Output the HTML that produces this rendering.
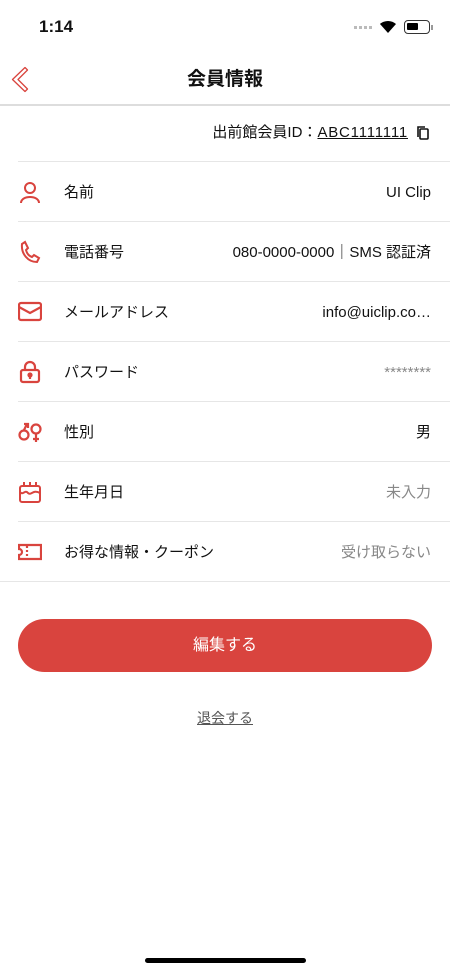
<!DOCTYPE html>
<html><head><meta charset="utf-8"><style>
*{margin:0;padding:0;box-sizing:border-box}
body{width:450px;height:974px;background:#fff;font-family:"Liberation Sans","Noto Sans CJK JP",sans-serif;color:#111;position:relative;overflow:hidden}
.abs{position:absolute}
.row{position:absolute;left:0;width:450px;height:60px}
.row .sep{position:absolute;left:18px;right:0;bottom:0;height:1px;background:#e6e6e6}
.row .lbl{position:absolute;left:64px;top:1px;line-height:60px;font-size:15px}
.row .val{position:absolute;right:19px;top:1px;line-height:60px;font-size:15px}
.row svg{position:absolute;left:18px;top:18px}
.g{color:#888}
</style></head><body>
<div class="abs" style="left:39px;top:17px;font-size:17px;font-weight:bold">1:14</div>
<div class="abs" style="left:354px;top:26px;width:20px;height:3px;background:repeating-linear-gradient(90deg,#bbb 0 3px,transparent 3px 5px)"></div>
<svg class="abs" style="left:379px;top:20px" width="18" height="14" viewBox="0 0 18 14"><path d="M9 13 L1 4 A12 12 0 0 1 17 4 Z" fill="#000"/></svg>
<div class="abs" style="left:404px;top:20px;width:26px;height:14px;border:1.5px solid #333;border-radius:4px"><div style="margin:2px;width:11px;height:7px;background:#000;border-radius:1px"></div></div>
<div class="abs" style="left:431px;top:25px;width:2px;height:5px;background:#999"></div>
<svg class="abs" style="left:10px;top:66px" width="20" height="28" viewBox="0 0 20 28"><path d="M15 1.5 L17.5 4 L8 13.5 L17.5 23 L15 25.5 L2.5 13.5 Z" fill="none" stroke="#d9443e" stroke-width="1.3" stroke-linejoin="round"/></svg>
<div class="abs" style="left:0;width:450px;top:66px;text-align:center;font-size:19px;font-weight:bold;line-height:28px">会員情報</div>
<div class="abs" style="left:0;top:104px;width:450px;height:2px;background:#ddd"></div>
<div class="abs" style="right:42px;top:122px;font-size:15px;line-height:22px">出前館会員ID：<span style="text-decoration:underline;letter-spacing:0.8px">ABC1111111</span></div>
<svg class="abs" style="left:416px;top:125px" width="14" height="16" viewBox="0 0 14 16"><rect x="4" y="4" width="8" height="10" fill="none" stroke="#111" stroke-width="1.6" rx="1"/><path d="M2 12 V2 H9" fill="none" stroke="#111" stroke-width="1.6"/></svg>
<div class="abs" style="left:18px;right:0;top:161px;height:1px;background:#e6e6e6"></div>

<div class="row" style="top:162px"><svg width="24" height="24" viewBox="0 0 24 24" fill="none" stroke="#d9443e" stroke-width="2"><circle cx="12" cy="8" r="5"/><path d="M3 23 C3 15 21 15 21 23"/></svg><div class="lbl">名前</div><div class="val">UI Clip</div><div class="sep"></div></div>
<div class="row" style="top:222px"><svg width="24" height="24" viewBox="0 0 24 24" fill="none" stroke="#d9443e" stroke-width="2"><path d="M7 2 L10 8 L8 10 C9 14 11 16 14 17 L16 15 L21 18 L19 22 C10 22 3 14 4 4 Z"/></svg><div class="lbl">電話番号</div><div class="val">080-0000-0000｜SMS 認証済</div><div class="sep"></div></div>
<div class="row" style="top:282px"><svg width="24" height="24" viewBox="0 0 24 24" fill="none" stroke="#d9443e" stroke-width="2.2"><rect x="1" y="3" width="22" height="17" rx="2"/><path d="M1 7 L12 13 L23 7"/></svg><div class="lbl">メールアドレス</div><div class="val">info@uiclip.co…</div><div class="sep"></div></div>
<div class="row" style="top:342px"><svg width="24" height="24" viewBox="0 0 24 24" fill="none" stroke="#d9443e" stroke-width="2.2"><path d="M7 10 V7 A5 5 0 0 1 17 7 V10"/><rect x="3" y="10" width="18" height="12" rx="2"/><circle cx="12" cy="15" r="1.5" fill="#d9443e"/><path d="M12 16 V19"/></svg><div class="lbl">パスワード</div><div class="val g">********</div><div class="sep"></div></div>
<div class="row" style="top:402px"><svg width="26" height="24" viewBox="0 0 26 24" fill="none" stroke="#d9443e" stroke-width="2.2"><circle cx="6" cy="15" r="4.5"/><path d="M6 10 L9 4 M6 4 H10 V8"/><circle cx="18" cy="9" r="4.5"/><path d="M18 14 V22 M15 19 H21"/></svg><div class="lbl">性別</div><div class="val">男</div><div class="sep"></div></div>
<div class="row" style="top:462px"><svg width="24" height="24" viewBox="0 0 24 24" fill="none" stroke="#d9443e" stroke-width="2"><rect x="2" y="6" width="20" height="16" rx="2"/><path d="M2 12 C5 16 7 9 10 13 C13 16 15 9 22 13 M6 2 V6 M12 2 V6 M18 2 V6"/></svg><div class="lbl">生年月日</div><div class="val g">未入力</div><div class="sep"></div></div>
<div class="row" style="top:522px"><svg width="24" height="24" viewBox="0 0 24 24" fill="none" stroke="#d9443e" stroke-width="2.2"><path d="M1 5 H23 V19 H1 V15 A3 3 0 0 0 1 9 Z"/><path d="M9 6 V18" stroke-dasharray="2 2"/></svg><div class="lbl">お得な情報・クーポン</div><div class="val g">受け取らない</div><div class="sep" style="left:0"></div></div>

<div class="abs" style="left:18px;top:619px;width:414px;height:53px;background:#d9443e;border-radius:27px;color:#fff;text-align:center;line-height:53px;font-size:16px">編集する</div>
<div class="abs" style="left:0;width:450px;top:708px;text-align:center;font-size:14px;color:#555;text-decoration:underline">退会する</div>
<div class="abs" style="left:145px;top:958px;width:161px;height:5px;background:#000;border-radius:3px"></div>
</body></html>
